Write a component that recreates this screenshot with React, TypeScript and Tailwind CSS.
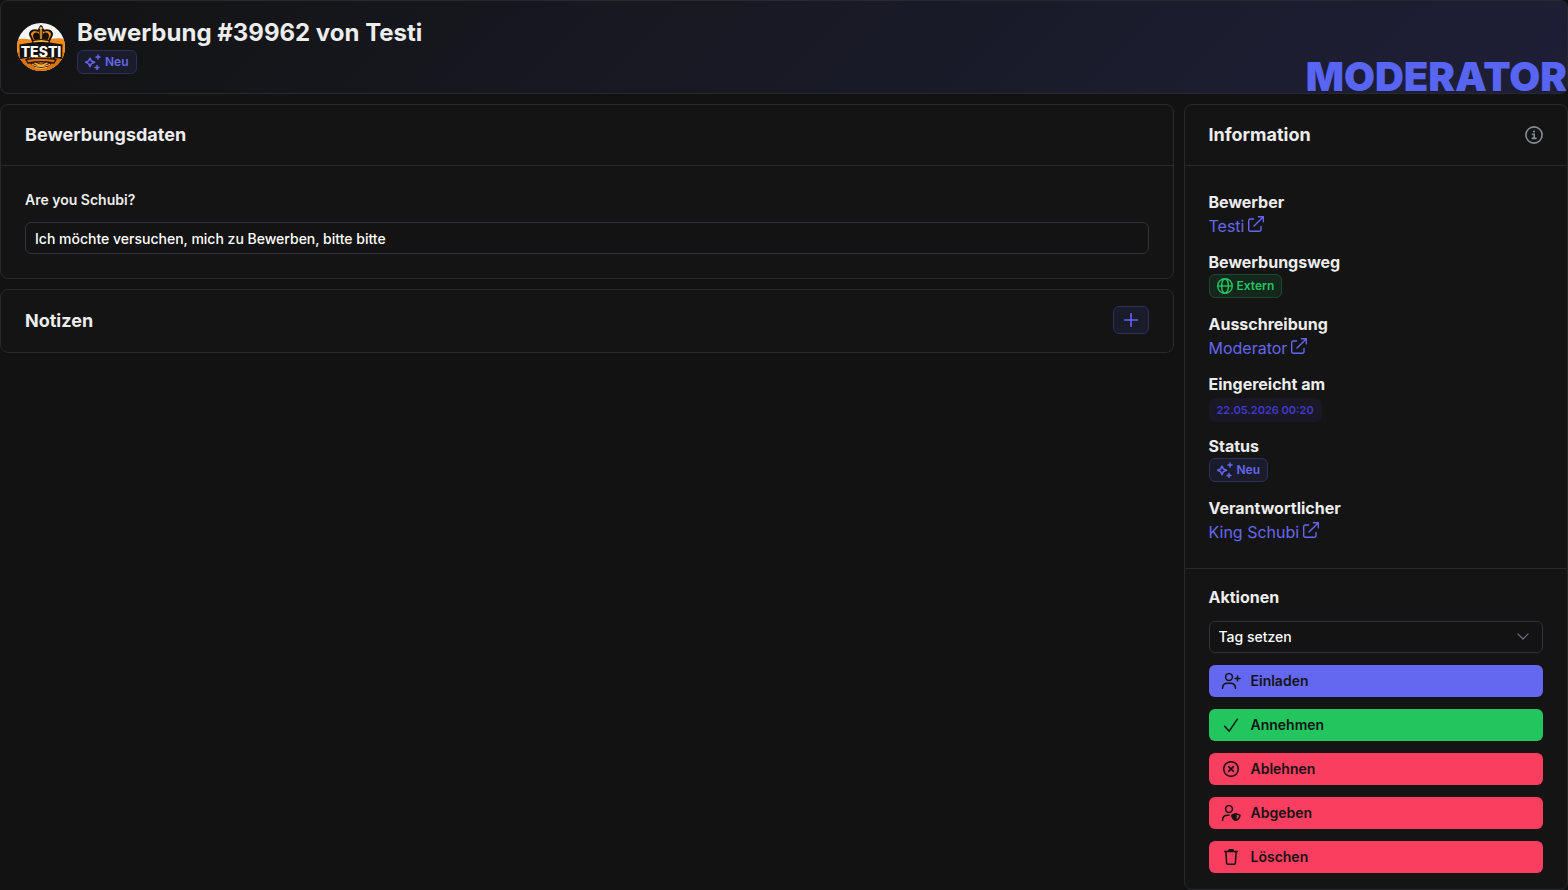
import type { ReactNode } from 'react';

type IconProps = { className?: string };

function SparklesIcon({ className }: IconProps) {
  return (
    <svg viewBox="0 0 16 16" className={className} fill="none" stroke="currentColor" strokeWidth="1.5" strokeLinejoin="round" strokeLinecap="round" aria-hidden="true">
      <path d="M5 4.2 6.4 7 9.6 8.3 6.4 9.6 5 12.6 3.6 9.6.7 8.3 3.6 7Z" />
      <path d="M13 .9v4M11 2.9h4M12 11.6v4M10 13.6h4" />
    </svg>
  );
}

function ExternalLinkIcon({ className }: IconProps) {
  return (
    <svg viewBox="0 0 16 16" className={className} fill="none" stroke="currentColor" strokeWidth="1.4" strokeLinejoin="round" strokeLinecap="round" aria-hidden="true">
      <path d="M10.4.7h5v5M15.2.9 6 10.1M5.6 3H2.2A1.5 1.5 0 0 0 .7 4.5v9.300a1.500 1.500 0 0 0 1.500 1.500h9.300a1.500 1.500 0 0 0 1.500-1.500v-3.400" />
    </svg>
  );
}

function GlobeIcon({ className }: IconProps) {
  return (
    <svg viewBox="0 0 16 16" className={className} fill="none" stroke="currentColor" strokeWidth="1.4" aria-hidden="true">
      <circle cx="8" cy="8" r="7.3" />
      <ellipse cx="8" cy="8" rx="3.4" ry="7.3" />
      <path d="M.7 8h14.6" />
    </svg>
  );
}

function InfoIcon({ className }: IconProps) {
  return (
    <svg viewBox="0 0 18 18" className={className} fill="none" stroke="currentColor" strokeWidth="1.6" strokeLinecap="round" aria-hidden="true">
      <circle cx="9" cy="9" r="8.1" />
      <path d="M7.5 8.3H9.2v4M7.2 12.400h3.800" />
      <circle cx="9" cy="5.5" r="1.1" fill="currentColor" stroke="none" />
    </svg>
  );
}

function PlusIcon({ className }: IconProps) {
  return (
    <svg viewBox="0 0 14 14" className={className} fill="none" stroke="currentColor" strokeWidth="1.6" strokeLinecap="round" aria-hidden="true">
      <path d="M7 .7v12.600M.7 7h12.600" />
    </svg>
  );
}

function ChevronIcon({ className }: IconProps) {
  return (
    <svg viewBox="0 0 12 7" className={className} fill="none" stroke="currentColor" strokeWidth="1.2" strokeLinecap="round" strokeLinejoin="round" aria-hidden="true">
      <path d="m.8.800 5.200 5.200L11.200.8" />
    </svg>
  );
}

function UserPlusIcon({ className }: IconProps) {
  return (
    <svg viewBox="0 0 20 16" className={className} fill="none" stroke="currentColor" strokeWidth="1.5" strokeLinecap="round" strokeLinejoin="round" aria-hidden="true">
      <circle cx="8" cy="4" r="3.4" />
      <path d="M1.5 15.400c0-3.300 2.300-5.200 5.200-5.200h2.600c2.900 0 5.200 1.900 5.200 5.200M16.500 3v5M14 5.500h5" />
    </svg>
  );
}

function CheckIcon({ className }: IconProps) {
  return (
    <svg viewBox="0 0 20 16" className={className} fill="none" stroke="currentColor" strokeWidth="1.5" strokeLinecap="round" strokeLinejoin="round" aria-hidden="true">
      <path d="m3.600 9.300 4.600 4.900L16.400 2.200" />
    </svg>
  );
}

function CircleXIcon({ className }: IconProps) {
  return (
    <svg viewBox="0 0 20 16" className={className} fill="none" stroke="currentColor" strokeWidth="1.5" strokeLinecap="round" aria-hidden="true">
      <circle cx="10" cy="8" r="7.3" />
      <path d="m7.600 5.600 4.800 4.800M12.400 5.600l-4.800 4.800" />
    </svg>
  );
}

function UserShieldIcon({ className }: IconProps) {
  return (
    <svg viewBox="0 0 20 16" className={className} fill="none" stroke="currentColor" strokeWidth="1.5" strokeLinecap="round" strokeLinejoin="round" aria-hidden="true">
      <circle cx="8" cy="4" r="3.4" />
      <path d="M1.500 15.400c0-3.300 2.300-5.200 5.200-5.200h1.300" />
      <path d="m15 8.700 3.900 1.400c0 2.600-1.200 4.300-3.900 5.300-2.700-1-3.900-2.700-3.900-5.300Z" />
      <path d="m15 8.700-3.900 1.400c0 2.600 1.200 4.300 3.900 5.300Z" fill="currentColor" />
    </svg>
  );
}

function TrashIcon({ className }: IconProps) {
  return (
    <svg viewBox="0 0 20 16" className={className} fill="none" stroke="currentColor" strokeWidth="1.5" strokeLinecap="round" strokeLinejoin="round" aria-hidden="true">
      <path d="M7.300 2.300 8.100.8h3.800l.8 1.500Z" fill="currentColor" />
      <path d="M3.700 2.600h12.600M4.900 2.900l.7 11.100a1.400 1.400 0 0 0 1.400 1.300h6a1.400 1.400 0 0 0 1.400-1.300l.7-11.100" />
    </svg>
  );
}

function Avatar() {
  return (
    <svg viewBox="0 0 48 48" className="size-12 shrink-0 rounded-full" role="img" aria-label="Testi">
      <rect width="48" height="48" fill="#f6f6f6" />
      <path d="M0 17c8-3 14 1 24 0s16-3 24-1v32H0Z" fill="#f08a1d" />
      <path d="M0 29h48v19H0Z" fill="#d9730f" />
      <circle cx="24" cy="31" r="13.5" fill="#f7a83a" stroke="#2b1503" strokeWidth="1.6" />
      <circle cx="24" cy="34" r="10" fill="none" stroke="#5f2d04" strokeWidth="1.4" />
      <circle cx="24" cy="34" r="7" fill="none" stroke="#5f2d04" strokeWidth="1.2" />
      <path d="M16.500 19 13 12c-.6-4 4.500-6.200 8-4L24 3l3 5c3.500-2.200 8.600 0 8 4l-3.500 7Z" fill="#e58a1c" stroke="#1b0f05" strokeWidth="1.8" strokeLinejoin="round" />
      <path d="M18.500 17c-3.500-5-1-7.500 2-6.500 1.500.5 1.500 3 1.500 6M29.500 17c3.500-5 1-7.500-2-6.500-1.500.5-1.500 3-1.500 6" fill="#1b0f05" stroke="#1b0f05" strokeWidth="1.400" />
      <path d="M24 3.500v13M22.200 5.300h3.600" stroke="#1b0f05" strokeWidth="3.400" />
      <path d="M24 3.800v13M22.500 5.300h3" stroke="#ffb84d" strokeWidth="1.400" />
      <path d="M16 17.500q8-2 16 0v3q-8-1.500-16 0Z" fill="#f9b040" stroke="#1b0f05" />
      <path d="M2.500 21.500q21.500-5 43 0l-.5 14.500q-21-4.500-42 0Z" fill="#16110e" />
      <text x="24" y="33.500" textAnchor="middle" fill="#ffffff" fontSize="14" fontWeight="800" fontFamily="Inter, sans-serif">
        TESTI
      </text>
      <path d="M9 36.500q15-2.500 30 0l-2 3.500q-13-2.500-26 0Z" fill="#d9730f" stroke="#2b1503" strokeWidth="1.400" />
      <path d="M15 41.500q9 4 18 0M18 44.500q6 2 12 0" fill="none" stroke="#ffc35c" strokeWidth="1" />
    </svg>
  );
}

function Badge({ color, children }: { color: 'indigo' | 'green'; children: ReactNode }) {
  return (
    <span
      className={`inline-flex h-6 items-center gap-1 rounded-md border px-[7px] text-xs font-semibold ${
        color === 'green'
          ? 'border-[#1c4a2f] bg-[#15261c] text-[#22c55e]'
          : 'border-[#2e2f5c] bg-[#1b1c2b] text-[#6467f0]'
      }`}
    >
      {children}
    </span>
  );
}

function NewBadge() {
  return (
    <Badge color="indigo">
      <SparklesIcon className="size-4" />
      Neu
    </Badge>
  );
}

function InfoRow({ label, children }: { label: string; children: ReactNode }) {
  return (
    <div>
      <dt className="font-bold">{label}</dt>
      <dd>{children}</dd>
    </div>
  );
}

function InfoLink({ children }: { children: ReactNode }) {
  return (
    <a href="#" className="flex h-6 items-center gap-1 text-[#6467f0] hover:underline">
      {children}
      <ExternalLinkIcon className="mb-1 size-4" />
    </a>
  );
}

const actions = [
  { label: 'Einladen', icon: UserPlusIcon, className: 'bg-[#6467f0]' },
  { label: 'Annehmen', icon: CheckIcon, className: 'bg-[#22c55e]' },
  { label: 'Ablehnen', icon: CircleXIcon, className: 'bg-[#fa3e5f]' },
  { label: 'Abgeben', icon: UserShieldIcon, className: 'bg-[#fa3e5f]' },
  { label: 'Löschen', icon: TrashIcon, className: 'bg-[#fa3e5f]' },
];

export default function App() {
  return (
    <div className="flex min-h-screen flex-col gap-[10px] bg-[#121212] font-['Inter',sans-serif] text-base text-[#ededed]">
      <header className="relative flex items-center gap-3 rounded-lg border border-[#27292d] bg-linear-135 from-[#131313] to-[#1e1f37] px-4 py-4">
        <Avatar />
        <div className="flex h-15 flex-col items-start">
          <h1 className="text-2xl leading-8 font-bold">Bewerbung #39962 von Testi</h1>
          <div className="pt-px">
            <NewBadge />
          </div>
        </div>
        <span className="absolute right-0 -bottom-1 text-[40px] leading-10 font-black text-[#5865f2]">
          MODERATOR
        </span>
      </header>

      <main className="grid flex-1 grid-cols-4 gap-[10px]">
        <div className="col-span-3 flex flex-col gap-[10px]">
          <section className="rounded-lg border border-[#27292d] bg-[#141414]">
            <h2 className="border-b border-[#27292d] px-6 py-4 text-lg leading-7 font-bold">Bewerbungsdaten</h2>
            <div className="flex flex-col gap-3 p-6">
              <label htmlFor="answer" className="text-sm font-semibold">
                Are you Schubi?
              </label>
              <input
                id="answer"
                type="text"
                readOnly
                value="Ich möchte versuchen, mich zu Bewerben, bitte bitte"
                className="h-8 w-full rounded-md border border-[#323338] bg-[#131313] px-[9px] text-sm font-medium text-white outline-none"
              />
            </div>
          </section>

          <section className="flex items-start justify-between rounded-lg border border-[#27292d] bg-[#141414] px-6 py-4">
            <h2 className="text-lg leading-[30px] font-bold">Notizen</h2>
            <button
              type="button"
              aria-label="Notiz hinzufügen"
              className="flex h-7 w-9 items-center justify-center rounded-md border border-[#2e2f5c] bg-[#1b1c2b] text-[#6467f0]"
            >
              <PlusIcon className="size-[14px]" />
            </button>
          </section>
        </div>

        <aside className="rounded-lg border border-[#27292d] bg-[#141414]">
          <div className="flex items-center justify-between border-b border-[#27292d] px-6 py-4">
            <h2 className="text-lg leading-7 font-bold">Information</h2>
            <InfoIcon className="size-[18px] text-[#858d9a]" />
          </div>

          <dl className="flex flex-col gap-3 p-6">
            <InfoRow label="Bewerber">
              <InfoLink>Testi</InfoLink>
            </InfoRow>
            <InfoRow label="Bewerbungsweg">
              <div className="flex pb-[2px]">
                <Badge color="green">
                  <GlobeIcon className="size-4" />
                  Extern
                </Badge>
              </div>
            </InfoRow>
            <InfoRow label="Ausschreibung">
              <InfoLink>Moderator</InfoLink>
            </InfoRow>
            <InfoRow label="Eingereicht am">
              <div className="flex pt-[2px]">
                <time className="inline-flex h-6 items-center rounded-md bg-[#191824] px-2 text-[11px] font-semibold text-[#4338ca]">
                  22.05.2026 00:20
                </time>
              </div>
            </InfoRow>
            <InfoRow label="Status">
              <div className="flex pb-[2px]">
                <NewBadge />
              </div>
            </InfoRow>
            <InfoRow label="Verantwortlicher">
              <InfoLink>King Schubi</InfoLink>
            </InfoRow>
          </dl>

          <div className="flex flex-col gap-3 border-t border-[#27292d] px-6 py-4">
            <label htmlFor="tag" className="font-bold">
              Aktionen
            </label>
            <div className="relative">
              <select
                id="tag"
                className="block h-8 w-full appearance-none rounded-md border border-[#323338] bg-[#131313] px-[9px] text-sm font-medium text-white"
              >
                <option>Tag setzen</option>
              </select>
              <ChevronIcon className="pointer-events-none absolute top-3 right-[14px] h-[7px] w-3 text-[#6b7280]" />
            </div>
            {actions.map(({ label, icon: Icon, className }) => (
              <button
                key={label}
                type="button"
                className={`flex h-8 items-center gap-[10px] rounded-md px-3 text-sm font-semibold text-[#141414] ${className}`}
              >
                <Icon className="h-4 w-5" />
                {label}
              </button>
            ))}
          </div>
        </aside>
      </main>
    </div>
  );
}
